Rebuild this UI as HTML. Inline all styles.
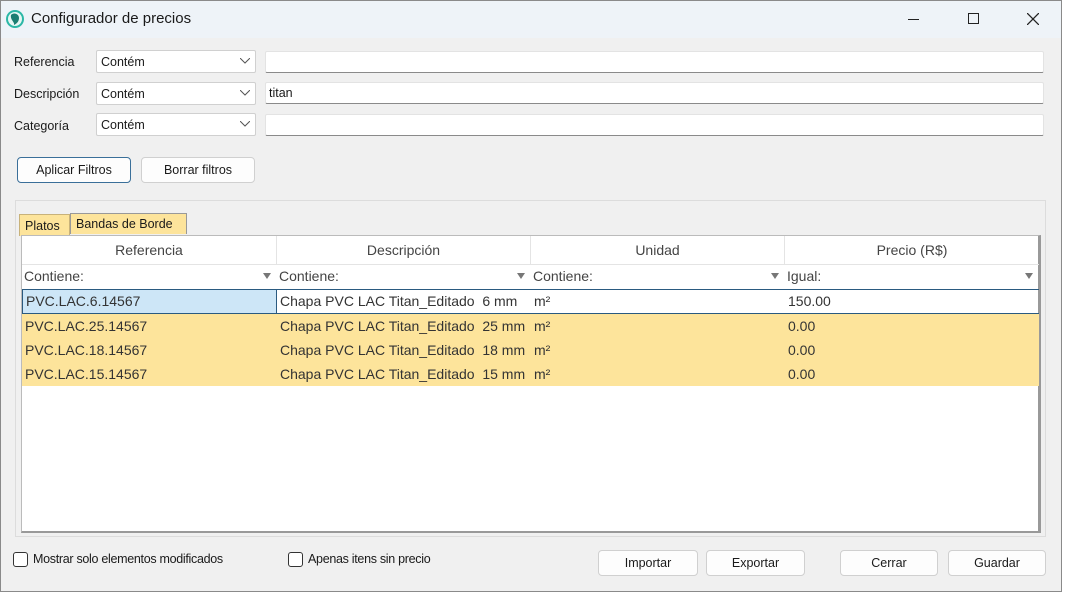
<!DOCTYPE html>
<html><head><meta charset="utf-8"><style>
*{box-sizing:border-box;margin:0;padding:0}
body{width:1065px;height:597px;background:#fff;font-family:"Liberation Sans",sans-serif;font-size:13px;color:#1a1a1a;position:relative;overflow:hidden}
.a{position:absolute}
#win{left:0;top:0;width:1062px;height:592px;background:#f0f0f0}
#frame{left:0;top:0;width:1062px;height:592px;border:1px solid #8a8a8a;pointer-events:none}
#title{left:0;top:0;width:1062px;height:38px;background:#eef3f8}
.combo{background:#fff;border:1px solid #d0d0d0;border-radius:2px;height:23px;width:160px;left:96px;padding:4px 4px;font-size:12.5px}
.combo svg{position:absolute;right:5px;top:7px}
.tf{left:265px;width:779px;height:22px;background:#fff;border:1px solid #e3e3e3;border-bottom:1px solid #8a8a8a;border-radius:2px;padding:3px 3px;font-size:12.5px}
.lbl{left:14px;font-size:12.5px}
.btn{background:#fdfdfd;border:1px solid #d0d0d0;border-radius:4px;height:26px;text-align:center;line-height:24px;font-size:12.5px}
.cell{position:absolute;height:24px;line-height:24px;padding-left:3px;font-size:14px;color:#333}
.hd{position:absolute;top:0;height:28px;line-height:28px;text-align:center;color:#444;border-right:1px solid #e4e4e4;font-size:14px}
.flt{position:absolute;top:28px;height:25px;line-height:25px;padding-left:2px;color:#444;font-size:14px}
.fi{position:absolute;right:6px;top:9px;width:0;height:0;border-left:4px solid transparent;border-right:4px solid transparent;border-top:6px solid #777}
.cb{width:15px;height:15px;border:1px solid #333;border-radius:3px;background:#fff}
</style></head><body>
<div id="win" class="a">
<div id="title" class="a"></div>
<svg class="a" style="left:5px;top:9px" width="20" height="20" viewBox="0 0 20 20"><circle cx="10" cy="10" r="9" fill="#2bb7a6"/><circle cx="10" cy="10" r="7" fill="#e6f7f4"/><path d="M6 6c3-3 8-1 8 3s-3 6-5 7c1-3-4-5-3-10z" fill="#1b7e72"/></svg>
<div class="a" style="left:31px;top:10px;font-size:15px;color:#1a1a1a">Configurador de precios</div>
<div class="a" style="left:908px;top:19px;width:11px;height:1px;background:#222"></div>
<div class="a" style="left:968px;top:13px;width:11px;height:11px;border:1.3px solid #222"></div>
<svg class="a" style="left:1027px;top:13px" width="12" height="12"><path d="M0 0L12 12M12 0L0 12" stroke="#222" stroke-width="1.3"/></svg>

<div class="a lbl" style="top:55px">Referencia</div>
<div class="a lbl" style="top:87px">Descripción</div>
<div class="a lbl" style="top:119px">Categoría</div>
<div class="a combo" style="top:50px">Contém<svg width="10" height="6"><path d="M0 0L5 5L10 0" fill="none" stroke="#555"/></svg></div>
<div class="a combo" style="top:82px">Contém<svg width="10" height="6"><path d="M0 0L5 5L10 0" fill="none" stroke="#555"/></svg></div>
<div class="a combo" style="top:113px">Contém<svg width="10" height="6"><path d="M0 0L5 5L10 0" fill="none" stroke="#555"/></svg></div>
<div class="a tf" style="top:51px"></div>
<div class="a tf" style="top:82px">titan</div>
<div class="a tf" style="top:114px"></div>
<div class="a btn" style="left:17px;top:157px;width:114px;border-color:#3a6f99">Aplicar Filtros</div>
<div class="a btn" style="left:141px;top:157px;width:114px">Borrar filtros</div>

<div class="a" style="left:15px;top:200px;width:1031px;height:337px;border:1px solid #dcdcdc"></div>
<div class="a" style="left:19px;top:214px;width:51px;height:22px;background:#fde49b;border:1px solid #c8b27a;border-bottom:none;padding:4px 5px;font-size:12.5px">Platos</div>
<div class="a" style="left:70px;top:213px;width:117px;height:21px;background:#fde49b;border:1px solid #999;border-bottom:none;padding:3px 5px;font-size:12.5px">Bandas de Borde</div>

<div class="a" style="left:21px;top:235px;width:1020px;height:298px;background:#fff;border:1px solid #bbb;border-right:3px solid #999;border-bottom:2px solid #999">
 <div class="hd" style="left:0;width:255px">Referencia</div>
 <div class="hd" style="left:255px;width:254px">Descripción</div>
 <div class="hd" style="left:509px;width:254px">Unidad</div>
 <div class="hd" style="left:763px;width:254px;border-right:none">Precio (R$)</div>
 <div class="a" style="left:0;top:28px;width:1017px;height:1px;background:#e4e4e4"></div>
 <div class="flt" style="left:0;width:255px">Contiene:<span class="fi"></span></div>
 <div class="flt" style="left:255px;width:254px">Contiene:<span class="fi"></span></div>
 <div class="flt" style="left:509px;width:254px">Contiene:<span class="fi"></span></div>
 <div class="flt" style="left:763px;width:254px">Igual:<span class="fi"></span></div>
 <div class="a" style="left:0;top:53px;width:1017px;height:1px;background:#2a5a80"></div>
 <div class="a" style="left:0;top:54px;width:1017px;height:24px;border-bottom:1px solid #2a5a80">
  <div class="cell" style="left:0;width:255px;height:23px;line-height:23px;background:#cde6f7;border:1px solid #2a5a80;border-top:none;border-bottom:none">PVC.LAC.6.14567</div>
  <div class="cell" style="left:255px;line-height:23px">Chapa PVC LAC Titan_Editado&nbsp; 6 mm</div>
  <div class="cell" style="left:509px;line-height:23px">m²</div>
  <div class="cell" style="left:763px;line-height:23px">150.00</div>
 </div>
 <div class="a" style="left:0;top:78px;width:1017px;height:72px;background:#fde49b"></div>
 <div class="cell" style="left:0;top:78px">PVC.LAC.25.14567</div><div class="cell" style="left:255px;top:78px">Chapa PVC LAC Titan_Editado&nbsp; 25 mm</div><div class="cell" style="left:509px;top:78px">m²</div><div class="cell" style="left:763px;top:78px">0.00</div>
 <div class="cell" style="left:0;top:102px">PVC.LAC.18.14567</div><div class="cell" style="left:255px;top:102px">Chapa PVC LAC Titan_Editado&nbsp; 18 mm</div><div class="cell" style="left:509px;top:102px">m²</div><div class="cell" style="left:763px;top:102px">0.00</div>
 <div class="cell" style="left:0;top:126px">PVC.LAC.15.14567</div><div class="cell" style="left:255px;top:126px">Chapa PVC LAC Titan_Editado&nbsp; 15 mm</div><div class="cell" style="left:509px;top:126px">m²</div><div class="cell" style="left:763px;top:126px">0.00</div>
</div>

<div class="a cb" style="left:13px;top:552px"></div>
<div class="a" style="left:33px;top:552px;font-size:12.5px;letter-spacing:-0.3px">Mostrar solo elementos modificados</div>
<div class="a cb" style="left:288px;top:552px"></div>
<div class="a" style="left:308px;top:552px;font-size:12.5px;letter-spacing:-0.3px">Apenas itens sin precio</div>
<div class="a btn" style="left:598px;top:550px;width:100px">Importar</div>
<div class="a btn" style="left:706px;top:550px;width:99px">Exportar</div>
<div class="a btn" style="left:840px;top:550px;width:98px">Cerrar</div>
<div class="a btn" style="left:948px;top:550px;width:98px">Guardar</div>
<div id="frame" class="a"></div>
</div>
</body></html>
